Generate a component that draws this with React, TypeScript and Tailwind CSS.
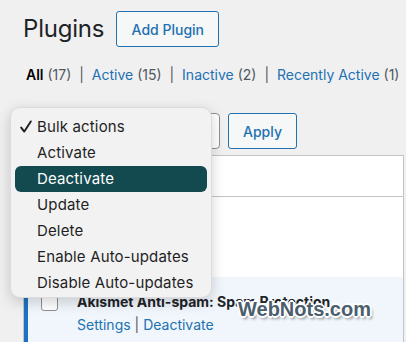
import React from "react";

export default function App() {
  const items = ["Activate", "Deactivate", "Update", "Delete", "Enable Auto-updates", "Disable Auto-updates"];
  return (
    <div className="relative w-[406px] h-[342px] overflow-hidden bg-[#f0f0f1] font-['Inter',sans-serif] text-[#1d2327]">
      <div className="flex items-center gap-[12px] pl-[23px] pt-[11px]">
        <h1 className="text-[24px] leading-[36px] font-normal tracking-[-0.2px]">Plugins</h1>
        <div className="h-[36px] w-[103px] flex items-center justify-center border border-[#2271b1] rounded-[3px] bg-[#f6f7f7] text-[#2271b1] text-[14px] font-medium">
          Add Plugin
        </div>
      </div>
      <div className="mt-[18px] pl-[26px] text-[14px] leading-[20px] text-[#50575e] whitespace-nowrap">
        <span className="font-semibold text-black">All</span> (17) <span className="mx-[4px]">|</span>{" "}
        <span className="text-[#2271b1]">Active</span> (15) <span className="mx-[4px]">|</span>{" "}
        <span className="text-[#2271b1]">Inactive</span> (2) <span className="mx-[4px]">|</span>{" "}
        <span className="text-[#2271b1]">Recently Active</span> (1)
      </div>
      <div className="mt-[28px] ml-[23px] flex gap-[8px]">
        <div className="h-[36px] w-[197px] border border-[#8c8f94] rounded-[4px] bg-white" />
        <div className="h-[36px] w-[69px] flex items-center justify-center border border-[#2271b1] rounded-[3px] bg-[#f6f7f7] text-[#2271b1] text-[14px] font-medium">
          Apply
        </div>
      </div>
      <div className="mt-[6px] ml-[23px] mr-[2px] border-t border-x border-[#c3c4c7] bg-white">
        <div className="h-[41px] border-b border-[#c3c4c7]" />
        <div className="h-[80px]" />
        <div className="h-[66px] bg-[#f0f6fc] border-l-[4px] border-[#1d72c2] flex items-start pt-[15px] pl-[13px] gap-[19px]">
          <div className="w-[17px] h-[17px] border border-[#8c8f94] rounded-[3px] bg-white mt-[2px]" />
          <div>
            <div className="text-[14px] font-bold leading-[20px] text-[#1d2327] whitespace-nowrap">Akismet Anti-spam: Spam Protection</div>
            <div className="text-[14px] leading-[20px] mt-[3px] text-[#50575e] whitespace-nowrap">
              <span className="text-[#2271b1]">Settings</span> | <span className="text-[#2271b1]">Deactivate</span>
            </div>
          </div>
        </div>
      </div>

      <div className="absolute left-[10px] top-[107px] w-[202px] h-[191px] rounded-[10px] bg-[#f2f2f3] border border-[#dcdcde] shadow-[0_4px_14px_rgba(0,0,0,0.18)] pt-[6px] text-[15px] tracking-[0.15px] text-[#1f1f1f]">
        <div className="h-[26px] flex items-center pl-[9px]">
          <svg width="12" height="14" viewBox="0 0 12 14" className="mr-[5px]">
            <path d="M1.2 7.6 L4.3 11.6 L10.8 1.4" fill="none" stroke="#1f1f1f" strokeWidth="1.9" strokeLinecap="round" strokeLinejoin="round" />
          </svg>
          <span>Bulk actions</span>
        </div>
        {items.map((t) => (
          <div
            key={t}
            className={
              t === "Deactivate"
                ? "h-[26px] mx-[4px] rounded-[6px] bg-[#134a4f] text-white flex items-center pl-[22px]"
                : "h-[26px] mx-[4px] flex items-center pl-[22px]"
            }
          >
            {t}
          </div>
        ))}
      </div>

      <div
        className="absolute left-[238px] top-[296px] font-['Liberation_Sans',Arial,sans-serif] font-bold text-[20px] leading-[26px] text-[#4b5e6e]"
        style={{
          textShadow:
            "1px 1px 0 #fff, -1px -1px 0 #fff, 1px -1px 0 #fff, -1px 1px 0 #fff, 0 2px 0 #fff, 2px 0 0 #fff, 0 -2px 0 #fff, -2px 0 0 #fff, 2px 3px 3px rgba(0,0,0,0.45)",
        }}
      >
        WebNots.com
      </div>
    </div>
  );
}
